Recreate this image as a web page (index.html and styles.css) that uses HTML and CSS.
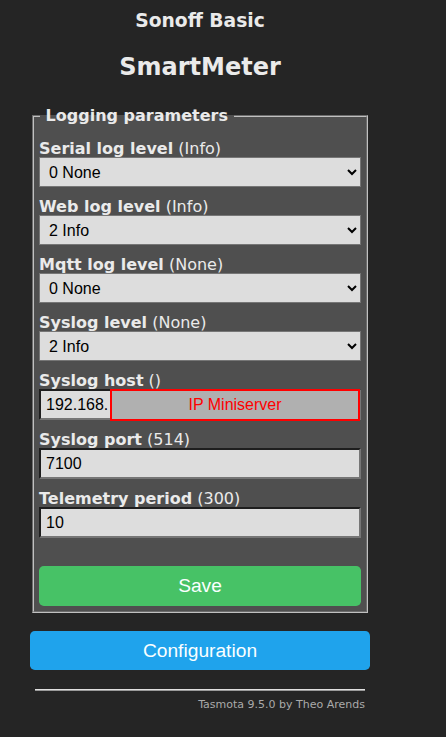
FILE: index.html
```html
<!DOCTYPE html>
<html>
<head>
<meta charset="utf-8">
<link rel="stylesheet" href="styles.css">
</head>
<body>
<div class="page">
  <div class="head">
    <h3 class="dev">Sonoff Basic</h3>
    <h2 class="name">SmartMeter</h2>
  </div>
  <fieldset class="box">
    <legend class="legend">&nbsp;Logging parameters&nbsp;</legend>
    <form class="form">
      <p class="row"><span class="lbl"><b>Serial log level</b> (Info)</span>
        <select class="sel"><option>0 None</option><option>1 Error</option><option>2 Info</option><option>3 Debug</option><option>4 More debug</option></select></p>
      <p class="row"><span class="lbl"><b>Web log level</b> (Info)</span>
        <select class="sel"><option>2 Info</option></select></p>
      <p class="row"><span class="lbl"><b>Mqtt log level</b> (None)</span>
        <select class="sel"><option>0 None</option></select></p>
      <p class="row"><span class="lbl"><b>Syslog level</b> (None)</span>
        <select class="sel"><option>2 Info</option></select></p>
      <p class="row"><span class="lbl"><b>Syslog host</b> ()</span>
        <span class="hostwrap"><input class="inp" value="192.168."><span class="mask">IP Miniserver</span></span></p>
      <p class="row"><span class="lbl"><b>Syslog port</b> (514)</span>
        <input class="inp" value="7100"></p>
      <p class="row"><span class="lbl"><b>Telemetry period</b> (300)</span>
        <input class="inp" value="10"></p>
      <div class="spacer"></div>
      <button type="button" class="btn green">Save</button>
    </form>
  </fieldset>
  <div class="gap"></div>
  <button type="button" class="btn blue">Configuration</button>
  <div class="foot">
    <hr class="rule">
    <span class="credit">Tasmota 9.5.0 by Theo Arends</span>
  </div>
</div>
</body>
</html>
```

FILE: styles.css
```css
html, body {
  margin: 0;
  padding: 0;
  background: #252525;
}
body {
  font-family: "DejaVu Sans", Verdana, sans-serif;
  color: #eaeaea;
}
.page {
  width: 340px;
  margin-left: 30px;
  display: flex;
  flex-direction: column;
}
.head {
  text-align: center;
  padding-top: 10px;
}
.dev {
  margin: 0;
  font-size: 18.72px;
  line-height: 22px;
  font-weight: bold;
}
.name {
  margin: 21px 0 0 0;
  font-size: 24px;
  line-height: 28px;
  font-weight: bold;
}
.box {
  margin: 25px 2px 0 2px;
  padding: 0 5px 5px 5px;
  background: #4f4f4f;
  border: 2px groove #c0c0c0;
}
.legend {
  font-weight: bold;
  font-size: 16px;
  line-height: 19px;
  padding: 0;
  margin-left: 1px;
}
.form {
  display: flex;
  flex-direction: column;
  padding-top: 12px;
}
.row {
  margin: 0 0 8px 0;
  display: flex;
  flex-direction: column;
}
.lbl {
  font-size: 16px;
  padding-top: 4px;
  line-height: 16px;
  height: 16px;
  white-space: nowrap;
}
.sel {
  height: 30px;
  width: 100%;
  box-sizing: border-box;
  margin: 0;
  padding: 0 5px;
  font-family: "Liberation Sans", Arial, sans-serif;
  font-size: 16px;
  background: #dddddd;
  color: #000;
  border: 1px solid #767676;
  border-radius: 0;
}
.inp {
  height: 31px;
  width: 100%;
  box-sizing: border-box;
  margin: 0;
  padding: 0 5px;
  font-family: "Liberation Sans", Arial, sans-serif;
  font-size: 16px;
  background: #dddddd;
  color: #000;
  border-style: solid;
  border-width: 2px;
  border-color: #1e1e1e #767676 #767676 #1e1e1e;
  outline: none;
}
.hostwrap {
  position: relative;
  display: block;
}
.mask {
  position: absolute;
  left: 71px;
  top: 0;
  width: 250px;
  height: 32px;
  box-sizing: border-box;
  border: 2px solid #ff0000;
  background: #b0b0b0;
  color: #ff0000;
  font-family: "Liberation Sans", Arial, sans-serif;
  font-size: 16px;
  line-height: 28px;
  text-align: center;
}
.spacer {
  height: 20px;
}
.btn {
  display: block;
  width: 100%;
  border: 0;
  border-radius: 4.8px;
  color: #faffff;
  font-family: "Liberation Sans", Arial, sans-serif;
  font-size: 19.2px;
  height: 40px;
  line-height: 40px;
  padding: 0;
  margin: 0;
}
.green {
  background: #47c266;
}
.blue {
  background: #1fa3ec;
  height: 39px;
  line-height: 39px;
}
.gap {
  height: 18px;
}
.foot {
  padding: 0 5px;
  text-align: right;
  display: flex;
  flex-direction: column;
}
.rule {
  margin: 19px 0 0 0;
  height: 0;
  border: 0;
  border-top: 1px solid #e0e0e0;
  border-bottom: 1px solid #9a9a9a;
}
.credit {
  font-size: 11px;
  line-height: 14px;
  margin-top: 7px;
  color: #aaaaaa;
}
```
